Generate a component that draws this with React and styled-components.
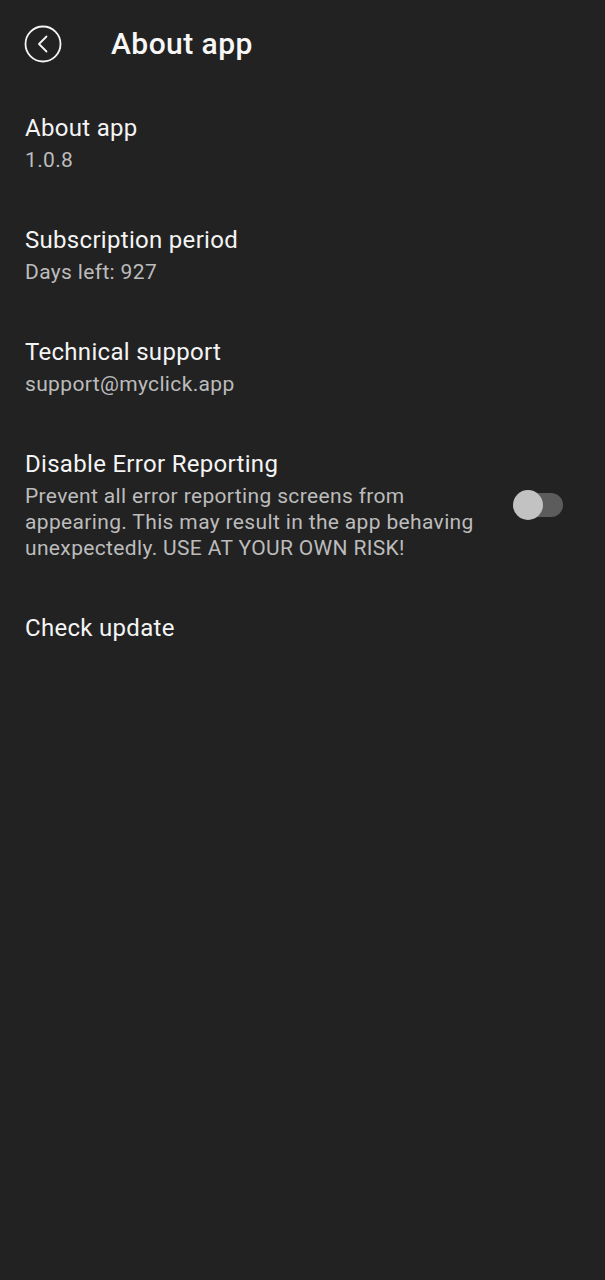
import styled, { createGlobalStyle } from "styled-components";

const GlobalStyle = createGlobalStyle`
  html, body {
    margin: 0;
    padding: 0;
    background: #222222;
  }
  body {
    font-family: Roboto, "Noto Sans", "Liberation Sans", sans-serif;
    color: #f4f4f4;
  }
`;

const Screen = styled.div`
  min-height: 1280px;
  background: #222222;
`;

const Header = styled.header`
  display: flex;
  align-items: center;
  height: 88px;
  padding: 0 24px;
  box-sizing: border-box;
`;

const BackButton = styled.button`
  display: flex;
  align-items: center;
  justify-content: center;
  width: 38px;
  height: 38px;
  padding: 0;
  border: none;
  background: transparent;
  color: #f4f4f4;
  cursor: pointer;
`;

const Title = styled.h1`
  margin: 0 0 0 49px;
  font-size: 30px;
  font-weight: 500;
  letter-spacing: 0.45px;
  line-height: 36px;
  color: #f7f7f7;
`;

const List = styled.div`
  display: flex;
  flex-direction: column;
`;

const Item = styled.div`
  display: flex;
  align-items: center;
  gap: 24px;
  padding: 24px 42px 27px 25px;
`;

const ItemText = styled.div`
  flex: 1;
  min-width: 0;
`;

const ItemTitle = styled.div`
  font-size: 24px;
  letter-spacing: 0.3px;
  line-height: 32px;
  color: #f4f4f4;
`;

const ItemSub = styled.div`
  margin-top: 3px;
  font-size: 21px;
  letter-spacing: 0.35px;
  line-height: 26px;
  color: #bcbcbc;
`;

const Track = styled.div`
  position: relative;
  flex: none;
  width: 48px;
  height: 24px;
  border-radius: 12px;
  background: ${({ on }) => (on ? "#7a9cff" : "#5c5c5c")};
  cursor: pointer;
`;

const Thumb = styled.div`
  position: absolute;
  top: -3px;
  left: ${({ on }) => (on ? "18px" : "-2px")};
  width: 30px;
  height: 30px;
  border-radius: 50%;
  background: #c2c2c2;
`;

const BackIcon = () => (
  <svg width="38" height="38" viewBox="0 0 38 38" fill="none">
    <circle cx="19" cy="19" r="17.5" stroke="currentColor" strokeWidth="1.8" />
    <path
      d="M22.5 11.5 L15 19 L22.5 26.5"
      stroke="currentColor"
      strokeWidth="1.8"
      strokeLinecap="round"
      strokeLinejoin="round"
    />
  </svg>
);

const items = [
  { title: "About app", sub: "1.0.8" },
  { title: "Subscription period", sub: "Days left: 927" },
  { title: "Technical support", sub: "support@myclick.app" },
  {
    title: "Disable Error Reporting",
    sub: "Prevent all error reporting screens from appearing. This may result in the app behaving unexpectedly. USE AT YOUR OWN RISK!",
    toggle: true,
  },
  { title: "Check update" },
];

const App = () => (
  <Screen>
    <GlobalStyle />
    <Header>
      <BackButton aria-label="Back">
        <BackIcon />
      </BackButton>
      <Title>About app</Title>
    </Header>
    <List>
      {items.map((item) => (
        <Item key={item.title}>
          <ItemText>
            <ItemTitle>{item.title}</ItemTitle>
            {item.sub && <ItemSub>{item.sub}</ItemSub>}
          </ItemText>
          {item.toggle && (
            <Track on={false}>
              <Thumb on={false} />
            </Track>
          )}
        </Item>
      ))}
    </List>
  </Screen>
);

export default App;
